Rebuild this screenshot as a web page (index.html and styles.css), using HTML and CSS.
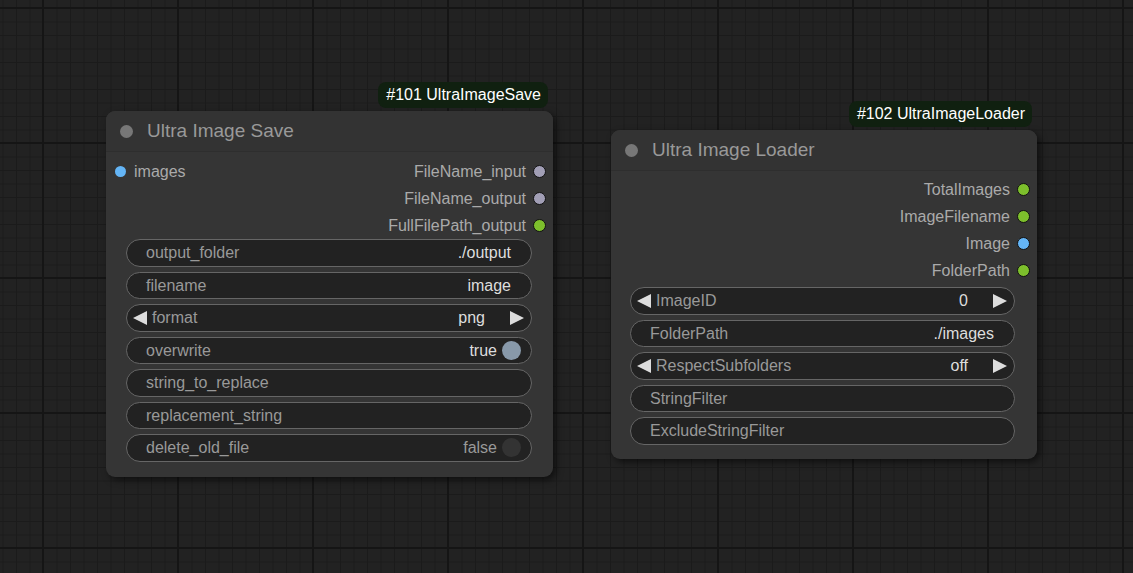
FILE: index.html
```html
<!DOCTYPE html>
<html>
<head>
<meta charset="utf-8">
<link rel="stylesheet" href="styles.css">
</head>
<body>
<div class="canvas">
  <div class="node node-save">
    <div class="badge">#101 UltraImageSave</div>
    <div class="title"><span class="title-dot"></span><span class="title-text">Ultra Image Save</span></div>
    <div class="body">
      <div class="slots">
        <div class="slot-row">
          <div class="slot-in"><span class="dot dot-blue"></span>images</div>
          <div class="slot-out">FileName_input<span class="dot dot-gray"></span></div>
        </div>
        <div class="slot-row">
          <div class="slot-in"></div>
          <div class="slot-out">FileName_output<span class="dot dot-gray"></span></div>
        </div>
        <div class="slot-row">
          <div class="slot-in"></div>
          <div class="slot-out">FullFilePath_output<span class="dot dot-green"></span></div>
        </div>
      </div>
      <div class="widgets">
        <div class="widget"><span class="w-label">output_folder</span><span class="w-value">./output</span></div>
        <div class="widget"><span class="w-label">filename</span><span class="w-value">image</span></div>
        <div class="widget combo"><span class="arrow arrow-left"></span><span class="w-label">format</span><span class="w-value">png</span><span class="arrow arrow-right"></span></div>
        <div class="widget toggle"><span class="w-label">overwrite</span><span class="w-value">true</span><span class="knob knob-on"></span></div>
        <div class="widget"><span class="w-label">string_to_replace</span></div>
        <div class="widget"><span class="w-label">replacement_string</span></div>
        <div class="widget toggle"><span class="w-label">delete_old_file</span><span class="w-value w-dim">false</span><span class="knob knob-off"></span></div>
      </div>
    </div>
  </div>

  <div class="node node-loader">
    <div class="badge">#102 UltraImageLoader</div>
    <div class="title"><span class="title-dot"></span><span class="title-text">Ultra Image Loader</span></div>
    <div class="body">
      <div class="slots">
        <div class="slot-row">
          <div class="slot-in"></div>
          <div class="slot-out">TotalImages<span class="dot dot-green"></span></div>
        </div>
        <div class="slot-row">
          <div class="slot-in"></div>
          <div class="slot-out">ImageFilename<span class="dot dot-green"></span></div>
        </div>
        <div class="slot-row">
          <div class="slot-in"></div>
          <div class="slot-out">Image<span class="dot dot-blue dot-ring"></span></div>
        </div>
        <div class="slot-row">
          <div class="slot-in"></div>
          <div class="slot-out">FolderPath<span class="dot dot-green"></span></div>
        </div>
      </div>
      <div class="widgets">
        <div class="widget combo"><span class="arrow arrow-left"></span><span class="w-label">ImageID</span><span class="w-value">0</span><span class="arrow arrow-right"></span></div>
        <div class="widget"><span class="w-label">FolderPath</span><span class="w-value">./images</span></div>
        <div class="widget combo"><span class="arrow arrow-left"></span><span class="w-label">RespectSubfolders</span><span class="w-value">off</span><span class="arrow arrow-right"></span></div>
        <div class="widget"><span class="w-label">StringFilter</span></div>
        <div class="widget"><span class="w-label">ExcludeStringFilter</span></div>
      </div>
    </div>
  </div>
</div>
</body>
</html>
```

FILE: styles.css
```css
html, body {
  margin: 0;
  padding: 0;
}

body {
  width: 1133px;
  height: 573px;
  overflow: hidden;
  font-family: "Liberation Sans", Arial, sans-serif;
  background-color: #222222;
  background-image:
    linear-gradient(to right, #151515 0, #151515 2px, transparent 2px),
    linear-gradient(to bottom, #151515 0, #151515 2px, transparent 2px),
    linear-gradient(to right, #1b1b1b 0, #1b1b1b 1px, transparent 1px),
    linear-gradient(to bottom, #1b1b1b 0, #1b1b1b 1px, transparent 1px);
  background-size: 135px 100%, 100% 135px, 13.5px 100%, 100% 13.5px;
  background-position: 42px 0, 0 7px, 43px 0, 0 8px;
}

.canvas {
  position: relative;
  width: 1133px;
  height: 573px;
}

.node {
  position: absolute;
  display: flex;
  flex-direction: column;
  background: #353535;
  border-radius: 9px;
  box-shadow: 3px 3px 7px rgba(0, 0, 0, 0.55);
  box-sizing: border-box;
}

.node-save {
  left: 106px;
  top: 111px;
  width: 447px;
  height: 366px;
}

.node-loader {
  left: 611px;
  top: 130px;
  width: 426px;
  height: 329px;
}

.badge {
  position: absolute;
  right: 5px;
  bottom: calc(100% + 3px);
  height: 26px;
  padding: 0 7px 0 8px;
  display: flex;
  align-items: center;
  background: #102010;
  color: #ffffff;
  font-size: 16px;
  border-radius: 8px;
  white-space: nowrap;
}

.title {
  height: 40px;
  display: flex;
  align-items: center;
  padding-left: 14px;
  background: #333333;
  border-radius: 9px 9px 0 0;
  border-bottom: 1px solid #2e2e2e;
}

.title-dot {
  width: 13px;
  height: 13px;
  border-radius: 50%;
  background: #777777;
  margin-right: 14px;
}

.title-text {
  color: #999999;
  font-size: 19px;
}

.body {
  display: flex;
  flex-direction: column;
  padding-top: 6px;
}

.node-loader .body {
  padding-top: 5px;
}

.slots {
  display: flex;
  flex-direction: column;
}

.slot-row {
  height: 27px;
  display: flex;
  align-items: center;
  justify-content: space-between;
  padding: 0 7px 0 8px;
  font-size: 16px;
  color: #aaaaaa;
}

.slot-in,
.slot-out {
  display: flex;
  align-items: center;
}

.slot-in .dot {
  margin-right: 8px;
}

.slot-out .dot {
  margin-left: 7px;
}

.dot {
  width: 13px;
  height: 13px;
  border-radius: 50%;
  box-sizing: border-box;
}

.dot-blue {
  background: #64b5f6;
  width: 11px;
  height: 11px;
  margin-left: 1px;
}

.dot-ring {
  width: 13px;
  height: 13px;
  border: 1.5px solid #111;
}

.dot-gray {
  background: #a19eb5;
  border: 1.5px solid #111;
}

.dot-green {
  background: #7dbf2c;
  border: 1.5px solid #111;
}

.widgets {
  display: flex;
  flex-direction: column;
  gap: 5px;
  padding: 0 21px 0 20px;
}

.node-loader .widgets {
  margin-top: 3px;
  padding: 0 22px 0 19px;
}

.widget {
  height: 27.5px;
  box-sizing: border-box;
  border: 1px solid #666666;
  border-radius: 14px;
  background: #222222;
  display: flex;
  align-items: center;
  padding: 1px 20px 0 19px;
  font-size: 16px;
}

.w-label {
  color: #999999;
  flex: 1;
  white-space: nowrap;
}

.w-value {
  color: #dddddd;
  white-space: nowrap;
}

.w-dim {
  color: #999999;
}

.combo {
  padding: 1px 7px 0 6px;
}

.combo .w-label {
  margin-left: 5px;
}

.combo .w-value {
  margin-right: 25px;
}

.arrow {
  width: 0;
  height: 0;
  border-top: 7px solid transparent;
  border-bottom: 7px solid transparent;
}

.arrow-left {
  border-right: 14px solid #dddddd;
}

.arrow-right {
  border-left: 14px solid #dddddd;
}

.toggle {
  padding-right: 10px;
}

.knob {
  width: 19px;
  height: 19px;
  border-radius: 50%;
  margin-left: 5px;
  margin-top: -1px;
}

.knob-on {
  background: #8899aa;
}

.knob-off {
  background: #333333;
}
```
